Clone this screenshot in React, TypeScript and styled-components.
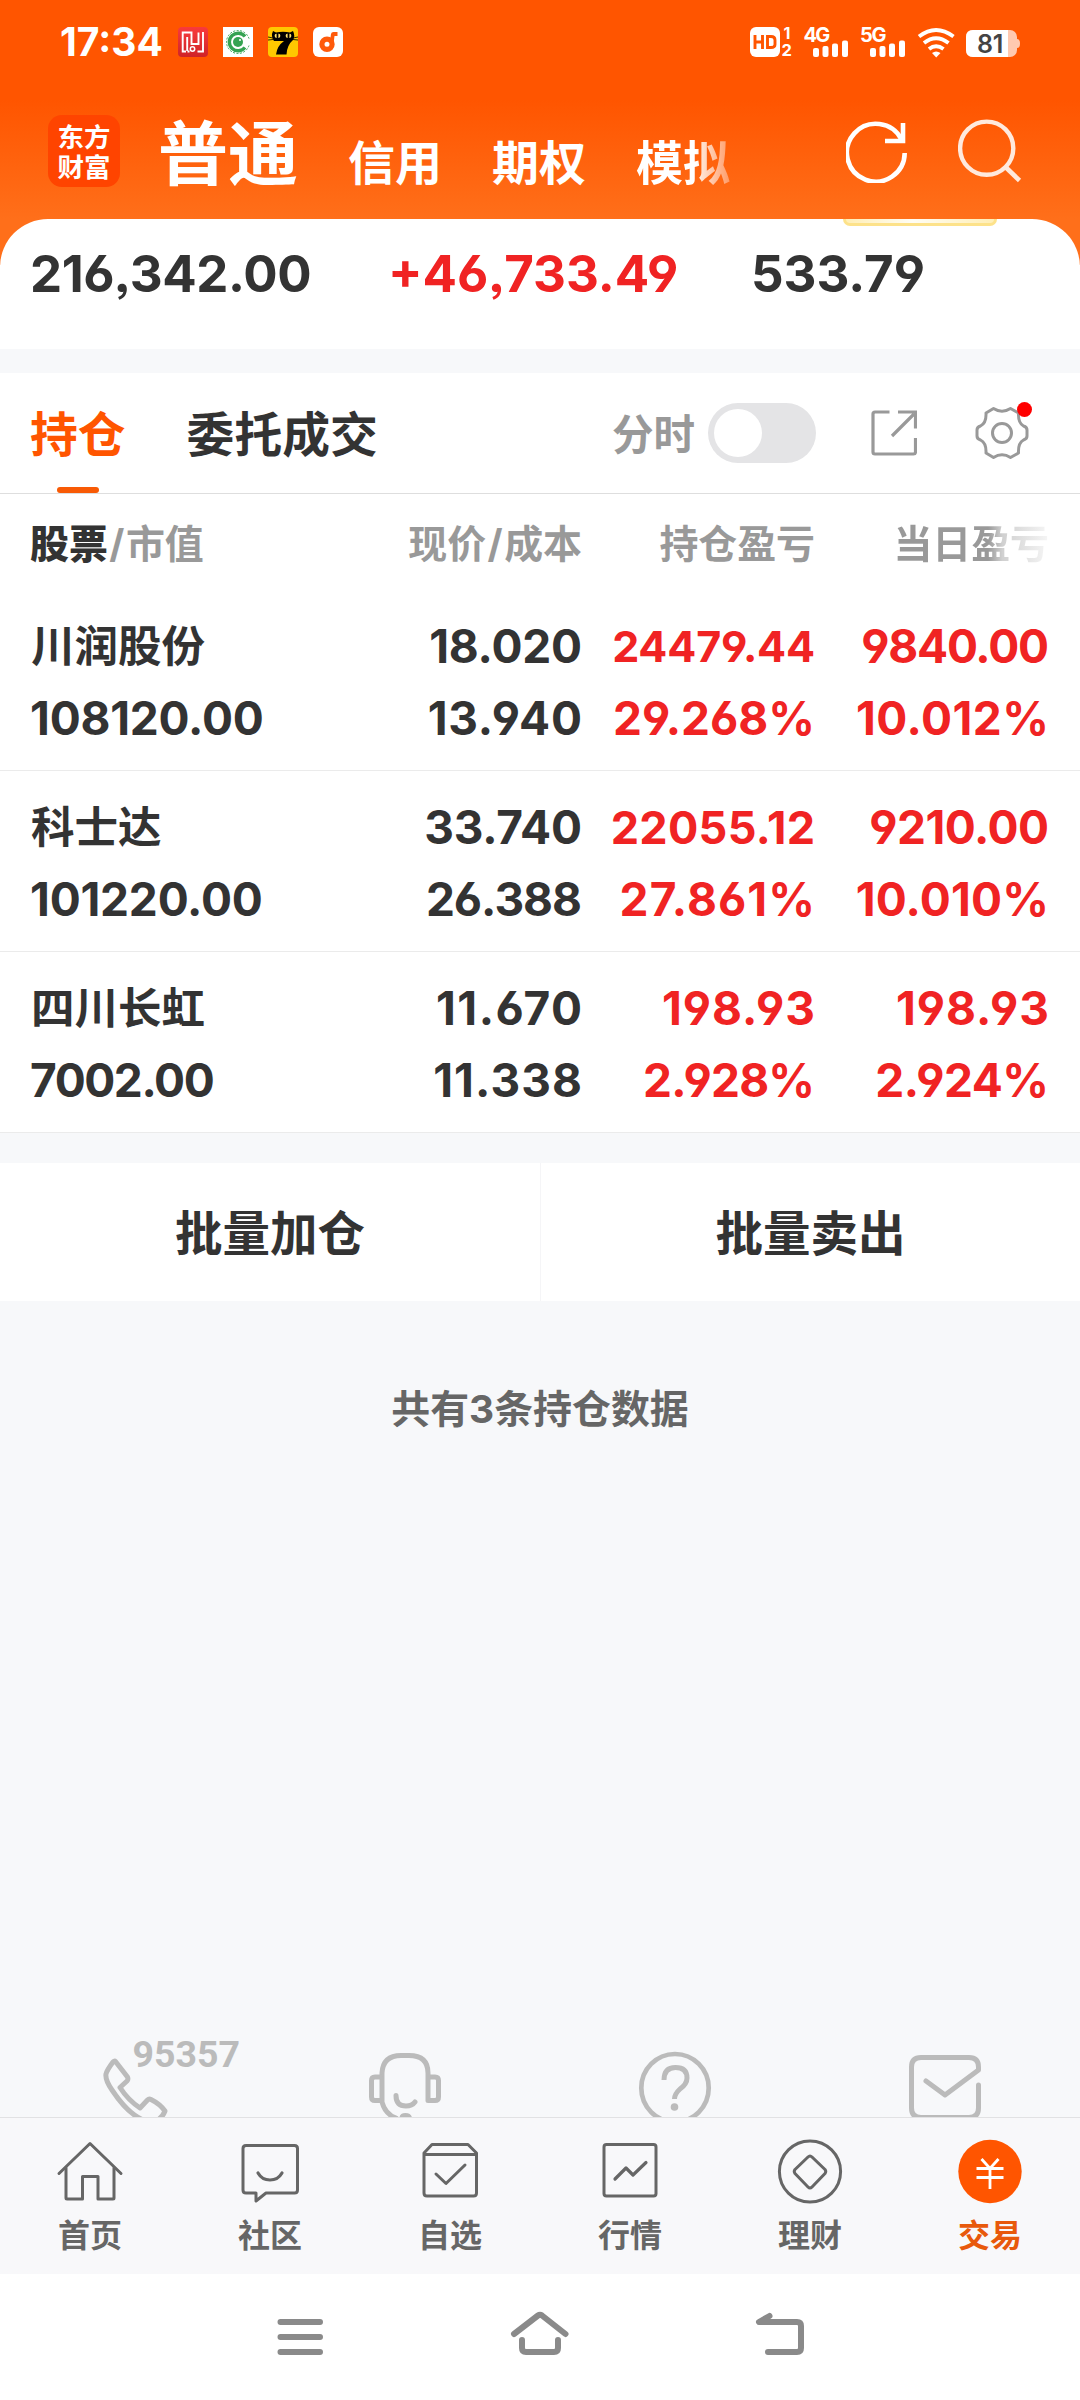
import React from "react";
import styled, { createGlobalStyle } from "styled-components";

const ink = "#333333";
const red = "#f02323";
const orange = "#ff5500";
const grey = "#999999";
const pageGrey = "#f7f8fa";

const GlobalStyle = createGlobalStyle`
  html, body { margin: 0; padding: 0; background: #fff; }
  * { box-sizing: border-box; }
  body { font-family: Inter, "Noto Sans CJK SC", sans-serif; font-feature-settings: "cv03", "cv04", "ss03"; }
  svg { display: block; flex: none; }
`;

const Screen = styled.div`
  width: 1080px;
  height: 2400px;
  display: flex;
  flex-direction: column;
  overflow: hidden;
  background: ${pageGrey};
`;

const Hero = styled.header`
  height: 265px;
  flex: none;
  background: linear-gradient(#ff5500 0, #ff5500 100px, #ff6f1a 219px, #ff6f1a 100%);
`;

const StatusBar = styled.div`
  height: 84px;
  padding: 0 60px 0 60px;
  display: flex;
  align-items: center;
  justify-content: space-between;
`;

const StatusLeft = styled.div`
  display: flex;
  align-items: center;
  gap: 15px;
`;

const Clock = styled.time`
  width: 103px;
  color: #fff;
  font-size: 39px;
  font-weight: 700;
  line-height: 40px;
  white-space: nowrap;
`;

const Toolbar = styled.div`
  height: 135px;
  padding: 0 56px 0 48px;
  display: flex;
  align-items: flex-start;
`;

const Logo = styled.div`
  display: flex;
  flex-direction: column;
  align-items: center;
  width: 72px;
  height: 72px;
  margin-top: 31px;
  padding-top: 6px;
  border-radius: 14px;
  background: #ff4400;
  color: #fff;
  font-family: "Noto Sans CJK SC", sans-serif;
  font-size: 26.5px;
  font-weight: 700;
  line-height: 30px;
  flex: none;
`;

const Accounts = styled.nav`
  display: flex;
  flex: 1;
  align-items: baseline;
  gap: 50px;
  height: 135px;
  padding: 26px 0 0 38px;
  color: #fff;
  font-weight: 700;
  white-space: nowrap;
`;

const Account = styled.span<{ $size: number; $fade?: boolean }>`
  font-size: ${(p) => p.$size}px;
  line-height: 90px;
  ${(p) => p.$fade && "background: linear-gradient(90deg, #fff 64%, #ffe3d2 70%, #ff9a66 100%); background-clip: text; color: transparent;"}
`;

const HeroActions = styled.div`
  display: flex;
  gap: 48px;
  padding-top: 33px;
`;

const Summary = styled.section`
  height: 130px;
  margin-top: -46px;
  flex: none;
  border-radius: 48px 48px 0 0;
  background: #fff;
  overflow: hidden;
`;

const Promo = styled.div`
  width: 154px;
  height: 7px;
  margin-left: 843px;
  border: solid #fde28a;
  border-width: 0 3px 3px;
  border-radius: 0 0 12px 12px;
  background: linear-gradient(90deg, #ffeeb5, #fffdf4 45%, #ffeeb5);
`;

const Totals = styled.div`
  display: grid;
  grid-template-columns: 358px 363px 1fr;
  padding-left: 30px;
`;

const Total = styled.span<{ $up?: boolean; $track: number }>`
  font-size: 51px;
  font-weight: 700;
  line-height: 96px;
  letter-spacing: ${(p) => p.$track}px;
  color: ${(p) => (p.$up ? red : ink)};
`;

const Band = styled.div<{ $h: number }>`
  height: ${(p) => p.$h}px;
  flex: none;
  background: ${pageGrey};
`;

const TabBar = styled.div`
  height: 121px;
  flex: none;
  padding: 0 51px 0 30px;
  display: flex;
  align-items: stretch;
  background: #fff;
  border-bottom: 1px solid #dedede;
`;

const Tab = styled.button<{ $active?: boolean }>`
  display: flex;
  flex-direction: column;
  align-items: center;
  justify-content: space-between;
  padding: 0;
  margin-right: 61px;
  border: 0;
  background: none;
  font: inherit;
  font-size: 47.8px;
  font-weight: 700;
  line-height: 124px;
  height: 120px;
  white-space: nowrap;
  color: ${(p) => (p.$active ? orange : ink)};
  &::after {
    content: "";
    width: 42px;
    height: 6px;
    margin-top: -10px;
    flex: none;
    border-radius: 3px;
    background: ${(p) => (p.$active ? "#f85a05" : "transparent")};
  }
`;

const TabTools = styled.div`
  display: flex;
  align-items: center;
  margin-left: auto;
`;

const ToolLabel = styled.span`
  font-size: 41.5px;
  font-weight: 700;
  line-height: 60px;
  color: ${grey};
  margin: 4px 13px 0 0;
`;

const Toggle = styled.div`
  width: 108px;
  height: 60px;
  padding: 6px;
  margin-right: 55px;
  border-radius: 30px;
  background: #e4e4e6;
  &::before {
    content: "";
    display: block;
    width: 48px;
    height: 48px;
    border-radius: 50%;
    background: #fff;
  }
`;

const GearWrap = styled.div`
  position: relative;
  margin-left: 58px;
`;

const Dot = styled.i`
  position: absolute;
  top: -4px;
  right: -3px;
  width: 15px;
  height: 15px;
  border-radius: 50%;
  background: #ff0000;
`;

const Table = styled.section`
  flex: none;
  background: #fff;
`;

const Columns = styled.div`
  display: grid;
  grid-template-columns: 352px 200px 233px 234px;
  padding-left: 30px;
`;

const Head = styled(Columns)`
  height: 96px;
  font-size: 38.9px;
  font-weight: 700;
  line-height: 100px;
  color: ${grey};
  white-space: nowrap;
`;

const HeadCell = styled.span<{ $right?: boolean; $fade?: boolean }>`
  text-align: ${(p) => (p.$right ? "right" : "left")};
  b { color: ${ink}; }
  ${(p) => p.$fade && `background: linear-gradient(90deg, ${grey} 74%, #d0d0d0 80%, #f6f6f6 100%); background-clip: text; color: transparent;`}
`;

const Slash = styled.i`
  font-style: normal;
  margin: 0 1.5px;
`;

const Row = styled(Columns)`
  height: 181px;
  padding-top: 20px;
  grid-auto-rows: 72px;
  border-bottom: 1px solid #ebebeb;
  align-content: start;
`;

const Name = styled.span`
  font-size: 43.5px;
  font-weight: 700;
  line-height: 72px;
  padding-left: 1px;
  color: ${ink};
`;

const Num = styled.span<{ $up?: boolean; $right?: boolean; $size?: number; $track?: number }>`
  font-size: ${(p) => p.$size ?? 46}px;
  font-weight: 700;
  line-height: 73px;
  letter-spacing: ${(p) => p.$track ?? 0}px;
  margin-right: ${(p) => -(p.$track ?? 0)}px;
  color: ${(p) => (p.$up ? red : ink)};
  display: flex;
  justify-content: ${(p) => (p.$right ? "flex-end" : "flex-start")};
  white-space: nowrap;
`;

const Batch = styled.div`
  display: grid;
  grid-template-columns: 1fr 1fr;
  height: 138px;
  flex: none;
  background: #fff;
`;

const BatchButton = styled.button`
  border: 0;
  padding: 3px 0 0;
  background: none;
  font: inherit;
  font-size: 47.5px;
  font-weight: 700;
  line-height: 135px;
  color: ${ink};
  & + & { border-left: 1px solid #f5f5f7; }
`;

const Count = styled.p`
  margin: 80px 0 0;
  flex: none;
  font-size: 38.9px;
  font-weight: 700;
  line-height: 56px;
  text-align: center;
  color: #666;
`;

const Support = styled.div`
  display: grid;
  grid-template-columns: repeat(4, 270px);
  height: 97px;
  margin-top: auto;
  flex: none;
  overflow: hidden;
`;

const TabNav = styled.nav`
  display: grid;
  grid-template-columns: repeat(6, 180px);
  height: 157px;
  flex: none;
  background: #f8f8fa;
  border-top: 1px solid #e2e2e4;
`;

const NavItem = styled.a<{ $active?: boolean }>`
  display: flex;
  flex-direction: column;
  align-items: center;
  padding-top: 17px;
  font-size: 32px;
  font-weight: 700;
  line-height: 57px;
  color: ${(p) => (p.$active ? "#e8590c" : "#666")};
`;

const SystemNav = styled.div`
  display: flex;
  justify-content: center;
  height: 126px;
  flex: none;
  background: #fff;
`;

const stroke = (color: string, width: number) => ({
  fill: "none",
  stroke: color,
  strokeWidth: width,
  strokeLinecap: "round" as const,
  strokeLinejoin: "round" as const,
});

const StatusApps = () => (
  <>
    <svg width="30" height="30" viewBox="0 0 30 30">
      <defs>
        <linearGradient id="app-red" x1="0" y1="0" x2="0" y2="1">
          <stop offset="0" stopColor="#f93a3c" />
          <stop offset="1" stopColor="#cf2327" />
        </linearGradient>
      </defs>
      <rect width="30" height="30" rx="4" fill="url(#app-red)" />
      <path d="M8 24.500H4.700V5.500H13.500V17H20.500V5.500M9.200 24V10M25 5V24.500H19.500M11.500 24.500H9.500" fill="none" stroke="#fff" strokeWidth="1.900" />
      <circle cx="14.500" cy="22" r="2.200" fill="none" stroke="#fff" strokeWidth="1.500" />
    </svg>
    <svg width="30" height="30" viewBox="0 0 30 30">
      <rect width="30" height="30" fill="#fff" />
      <circle cx="15" cy="15" r="11.500" fill="none" stroke="#35a352" strokeWidth="1" strokeDasharray="2 1.500" />
      <path d="M22 9.500A8.800 8.800 0 1 0 22 20.500" fill="none" stroke="#35a352" strokeWidth="3.400" />
      <circle cx="15" cy="15" r="5" fill="#35a352" />
      <circle cx="17" cy="13" r="1" fill="#fff" />
      <path d="M23 11L27 12V18L23 19Z" fill="#fff" />
    </svg>
    <svg width="30" height="30" viewBox="0 0 30 30">
      <rect width="30" height="30" rx="4" fill="#ffc800" />
      <path d="M5 4L8 5.500Q15 4 22 5.500L25 4Q27.500 9 25 13Q19 18 18.500 27.500H8Q9 19 16 14H6Q2.500 9 5 4Z" fill="#000" />
      <path d="M0 10L5 11M0 13L5 12.500M30 10L25 11M30 13L25 12.500" stroke="#000" strokeWidth=".8" />
      <ellipse cx="9.500" cy="8.800" rx="2.800" ry="2.300" fill="#ffe36b" />
      <ellipse cx="20.500" cy="8.800" rx="2.800" ry="2.300" fill="#ffe36b" />
      <path d="M9.500 6V11.500M20.500 6V11.500" stroke="#000" strokeWidth="1.800" />
    </svg>
    <svg width="30" height="30" viewBox="0 0 30 30">
      <rect width="30" height="30" rx="6" fill="#fff" />
      <circle cx="14" cy="17.200" r="5.100" fill="none" stroke="#ff5a0a" strokeWidth="5.200" />
      <path d="M17 14L18 7Q18.300 5 20.500 5H24.500V9H21.500L20.500 17Z" fill="#ff5a0a" />
    </svg>
  </>
);

const StatusIndicators = () => (
  <svg width="270" height="60" viewBox="750 12 270 60" fontFamily="Inter, sans-serif" fontWeight="700" fill="#fff">
    <rect x="750" y="27" width="30" height="30" rx="6" />
    <path d="M755 35V49M762.500 35V49M755 42H762.500M767.500 36.500H771Q775 36.500 775 40V44.500Q775 47.500 771 47.500H767.500Z" fill="none" stroke="#ff5500" strokeWidth="2.900" />
    <text x="783.500" y="39" fontSize="16">1</text>
    <text x="781.500" y="56" fontSize="16.500">2</text>
    <text x="803.500" y="41.800" fontSize="20" letterSpacing="-1.800">4G</text>
    <text x="860" y="41.800" fontSize="20" letterSpacing="-1.400">5G</text>
    {[813, 870].map((x) => (
      <g key={x}>
        <rect x={x} y="48" width="6" height="9" rx="2" />
        <rect x={x + 9.500} y="46" width="6" height="11" rx="2" />
        <rect x={x + 19} y="43.500" width="6" height="13.500" rx="2" />
        <rect x={x + 29} y="40.500" width="6" height="16.500" rx="2" />
      </g>
    ))}
    <g fill="none" stroke="#fff" strokeWidth="3.900">
      <path d="M919 36.500Q936 23.500 953.500 36.500" />
      <path d="M924 43Q936 33.500 948.500 43" />
      <path d="M929 49Q936 43.500 943.500 49" />
    </g>
    <path d="M932 53Q936 50 940.500 53L936.200 57.500Z" />
    <rect x="966" y="30" width="51" height="27" rx="7" fill="#ffc9b0" />
    <path d="M1017 39Q1020 39 1020 43.500Q1020 48 1017 48Z" fill="#ffc9b0" />
    <path d="M973 30H1008V57H973Q966 57 966 50V37Q966 30 973 30Z" />
    <text x="977" y="52.500" fontSize="25" fontWeight="600" letterSpacing="-.3" fill="#444">81</text>
  </svg>
);

const RefreshIcon = () => (
  <svg width="64" height="66" viewBox="0 0 64 66" fill="none" stroke="#fff" strokeWidth="4.600">
    <path d="M58.700 36A28.900 28.900 0 1 1 55.500 22.500" />
    <path d="M57 6V24H39" />
  </svg>
);

const SearchIcon = () => (
  <svg width="66" height="66" viewBox="0 0 66 66" fill="none" stroke="#ffe9dd" strokeWidth="4.400">
    <circle cx="28.700" cy="31.200" r="26.600" />
    <path d="M47.500 50L61.500 63.500" strokeWidth="4.600" />
  </svg>
);

const ShareIcon = () => (
  <svg width="46" height="46" viewBox="0 0 46 46" {...stroke(grey, 3.200)} strokeLinecap="butt" strokeLinejoin="miter">
    <path d="M18.500 2H4Q2 2 2 4V42Q2 44 4 44H42.500Q44.500 44 44.500 42V28" />
    <path d="M27 2H44.500V18.500M43 4L21 26" />
  </svg>
);

const GearIcon = () => (
  <svg width="54" height="54" viewBox="0 0 54 54" {...stroke(grey, 3)}>
    <path d="M11 7L18.500 2.500Q27 8 35.500 2.500L43.500 7Q43 17 48.500 20Q52 21 52 24V30Q52 33 48.500 34Q43 37 43.500 47L35.500 51.500Q27 46 18.500 51.500L11 47Q11.500 37 5.500 34Q2 33 2 30V24Q2 21 5.500 20Q11.500 17 11 7Z" />
    <circle cx="27" cy="27" r="9.500" />
  </svg>
);

const supportStroke = stroke("#bbbbbb", 5);

const PhoneIcon = () => (
  <svg width="270" height="97" viewBox="0 2020 270 97">
    <path {...supportStroke} d="M115.500 2061.500L127.500 2077Q128.500 2079 127 2081L120 2087.500Q128 2100 140 2108L147.500 2100Q149 2098.500 151 2099.500Q160 2104 165 2111Q161 2121 151 2122Q132 2120 112 2090Q105 2080 106 2074Q107 2070 113 2062Q114.500 2060.500 115.500 2061.500Z" />
    <text x="132.500" y="2067" fontFamily="Roboto, sans-serif" fontWeight="700" fontSize="37.500" letterSpacing="0" fill="#bbbbbb">95357</text>
  </svg>
);

const HeadsetIcon = () => (
  <svg width="270" height="97" viewBox="270 2020 270 97" {...supportStroke}>
    <path d="M382 2077V2102Q385 2114 396 2118M382 2077V2073Q383 2055.500 401 2055.500H409Q428 2055.500 428 2073V2100.500H435Q438.500 2100.500 438.500 2097V2080.500Q438.500 2077 435 2077H430" />
    <path d="M380 2077H375Q371.500 2077 371.500 2080.500V2097Q371.500 2100.500 375 2100.500H380" />
    <path d="M396 2095.500Q396 2106 406 2106Q412 2106 415 2102" />
    <path d="M402 2118Q402 2115.500 405.500 2115.500Q409 2115.500 409.500 2118" />
  </svg>
);

const HelpIcon = () => (
  <svg width="270" height="97" viewBox="540 2020 270 97" {...supportStroke}>
    <ellipse cx="675" cy="2088" rx="33.700" ry="34" strokeWidth="4.700" />
    <path strokeLinecap="butt" d="M664 2080Q664 2067.500 675.500 2067.500Q687 2067.500 687 2078Q687 2084 680 2089Q674.500 2094 674.500 2099" />
    <circle cx="674.500" cy="2107" r="3.800" fill="#bbbbbb" stroke="none" />
  </svg>
);

const MailIcon = () => (
  <svg width="270" height="97" viewBox="810 2020 270 97" {...supportStroke}>
    <path d="M926 2081L945 2095L978.500 2070V2067Q978.500 2057.500 969 2057.500H921Q911.500 2057.500 911.500 2067V2108Q911.500 2117.500 921 2117.500H969Q978.500 2117.500 978.500 2108V2085" />
  </svg>
);

const line = stroke("#666666", 3);
const navIcons: Record<string, React.ReactNode> = {
  首页: (
    <g {...line}>
      <path d="M5 38.500L36 8.500L67 38.500" />
      <path d="M12 33V63Q12 64 13 64H28.500V41.500H44V64H59Q60 64 60 63V33" />
    </g>
  ),
  社区: (
    <g {...line}>
      <path d="M12 10.500H60.500Q63.500 10.500 63.500 13.500V55Q63.500 58 60.500 58H32L22 66V58H12Q9 58 9 55V13.500Q9 10.500 12 10.500Z" />
      <path strokeWidth="3.200" d="M24 38Q28 45 36 45Q44 45 48 38" />
    </g>
  ),
  自选: (
    <g {...line}>
      <path d="M10 18L18 9.500H54L62.500 18V58Q62.500 61 59.500 61H13Q10 61 10 58ZM10 19.500H62" />
      <path d="M22 39L32 48.500L51 30" />
    </g>
  ),
  行情: (
    <g {...line}>
      <rect x="10" y="9.500" width="52" height="51.500" rx="2.500" />
      <path strokeWidth="3.200" d="M21 44L32 33L39 40L52 27.500" />
    </g>
  ),
  理财: (
    <g {...line}>
      <circle cx="36" cy="36.500" r="30.600" />
      <path d="M34 22Q36 20 38 22L51 34.500Q52.500 36.500 51 38.500L38 52Q36 54 34 52L21 38.500Q19.500 36.500 21 34.500Z" />
    </g>
  ),
  交易: (
    <g>
      <circle cx="36" cy="36.500" r="31.700" fill="#ff5500" />
      <path d="M27.500 24L36 33.500L44.500 24M22.500 33.500H49.500M22.500 42.500H49.500M36 33.500V54" fill="none" stroke="#fff" strokeWidth="2.800" />
    </g>
  ),
};

const NavIcon = ({ name }: { name: string }) => (
  <svg width="72" height="72" viewBox="0 0 72 72">{navIcons[name]}</svg>
);

const sys = stroke("#8a8a8a", 6);

type Figure = { v: string; size?: number; track?: number };
const f = (v: string, track = 0, size?: number): Figure => ({ v, track, size });

const holdings: { name: string; top: Figure[]; bottom: Figure[] }[] = [
  {
    name: "川润股份",
    top: [f("18.020", -0.2), f("24479.44", -0.2, 43), f("9840.00", -1.2)],
    bottom: [f("108120.00", -0.2), f("13.940", 0.8), f("29.268%"), f("10.012%", 0.5)],
  },
  {
    name: "科士达",
    top: [f("33.740", -0.2), f("22055.12", 0.3, 45), f("9210.00", -0.5)],
    bottom: [f("101220.00", -0.2), f("26.388", -1), f("27.861%", 1.1), f("10.010%", 0.2)],
  },
  {
    name: "四川长虹",
    top: [f("11.670", 1.5), f("198.93", 1), f("198.93", 1)],
    bottom: [f("7002.00", -1.4), f("11.338", 1.1), f("2.928%", -0.8), f("2.924%", -0.5)],
  },
];

export default function App() {
  return (
    <>
      <GlobalStyle />
      <Screen>
        <Hero>
          <StatusBar>
            <StatusLeft>
              <Clock>17:34</Clock>
              <StatusApps />
            </StatusLeft>
            <StatusIndicators />
          </StatusBar>
          <Toolbar>
            <Logo>
              <span>东方</span>
              <span>财富</span>
            </Logo>
            <Accounts>
              <Account $size={70}>普通</Account>
              <Account $size={47}>信用</Account>
              <Account $size={47}>期权</Account>
              <Account $size={47} $fade>模拟</Account>
            </Accounts>
            <HeroActions>
              <RefreshIcon />
              <SearchIcon />
            </HeroActions>
          </Toolbar>
        </Hero>

        <Summary>
          <Promo />
          <Totals>
            <Total $track={-0.4}>216,342.00</Total>
            <Total $track={0} $up>+46,733.49</Total>
            <Total $track={0}>533.79</Total>
          </Totals>
        </Summary>

        <Band $h={24} />

        <TabBar>
          <Tab $active>持仓</Tab>
          <Tab>委托成交</Tab>
          <TabTools>
            <ToolLabel>分时</ToolLabel>
            <Toggle />
            <ShareIcon />
            <GearWrap>
              <GearIcon />
              <Dot />
            </GearWrap>
          </TabTools>
        </TabBar>

        <Table>
          <Head>
            <HeadCell><b>股票</b><Slash>/</Slash>市值</HeadCell>
            <HeadCell $right>现价<Slash>/</Slash>成本</HeadCell>
            <HeadCell $right>持仓盈亏</HeadCell>
            <HeadCell $right $fade>当日盈亏</HeadCell>
          </Head>
          {holdings.map((h) => (
            <Row key={h.name}>
              <Name>{h.name}</Name>
              {h.top.map((n, i) => (
                <Num key={i} $right $up={i > 0} $size={n.size} $track={n.track}>{n.v}</Num>
              ))}
              {h.bottom.map((n, i) => (
                <Num key={i} $right={i > 0} $up={i > 1} $size={n.size} $track={n.track}>{n.v}</Num>
              ))}
            </Row>
          ))}
        </Table>

        <Band $h={30} />

        <Batch>
          <BatchButton>批量加仓</BatchButton>
          <BatchButton>批量卖出</BatchButton>
        </Batch>

        <Count>共有3条持仓数据</Count>

        <Support>
          <PhoneIcon />
          <HeadsetIcon />
          <HelpIcon />
          <MailIcon />
        </Support>

        <TabNav>
          {Object.keys(navIcons).map((name) => (
            <NavItem key={name} $active={name === "交易"}>
              <NavIcon name={name} />
              {name}
            </NavItem>
          ))}
        </TabNav>

        <SystemNav>
          <svg width="240" height="126" viewBox="180 2274 240 126" {...sys}>
            <path d="M280.500 2322H320M280.500 2337H320M280.500 2352H320" />
          </svg>
          <svg width="240" height="126" viewBox="420 2274 240 126" {...sys}>
            <path d="M514 2334L538 2315.500Q540 2314 542 2315.500L565.500 2334M522 2340V2348Q522 2352 526 2352H554Q558 2352 558 2348V2340" />
          </svg>
          <svg width="240" height="126" viewBox="660 2274 240 126" {...sys}>
            <path d="M769.500 2316L759 2322H797Q801 2322 801 2326V2348Q801 2352 797 2352H768" />
          </svg>
        </SystemNav>
      </Screen>
    </>
  );
}
